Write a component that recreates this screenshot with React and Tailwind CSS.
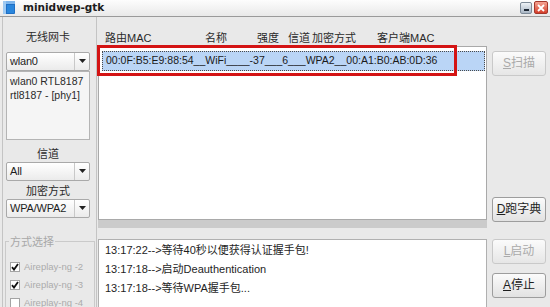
import React from "react";

const FONT = "font-['Liberation_Sans','Noto_Sans_CJK_SC',sans-serif]";

function Combo({ value }) {
  return (
    <div className="ml-[1px] flex h-[19px] w-[84px] rounded-[2px] border border-[#a9a9a9] bg-linear-to-b from-white to-[#ebebeb]">
      <div className="flex flex-1 items-center overflow-hidden whitespace-nowrap pl-[3px] text-[11px] tracking-[-0.2px] text-[#1e1e1e]">
        {value}
      </div>
      <div className="flex w-[15px] items-center justify-center border-l border-[#c8c8c8]">
        <svg width="7" height="4" viewBox="0 0 7 4">
          <path d="M0 0H7L3.5 4Z" fill="#222" />
        </svg>
      </div>
    </div>
  );
}

function Label({ children }) {
  return (
    <div className="ml-[1px] flex h-[16px] w-[84px] items-center justify-center text-[11px] text-[#2a2a2a]">
      {children}
    </div>
  );
}

function Check({ checked, text }) {
  return (
    <div className="flex h-[18px] items-center gap-[4px] pl-[3px]">
      <div className="flex h-[10px] w-[10px] shrink-0 items-center justify-center border border-[#a4a4a4] bg-white">
        {checked && (
          <svg width="8" height="8" viewBox="0 0 8 8">
            <path d="M1 4.2L3 6.6L7 1" stroke="#111" strokeWidth="1.8" fill="none" />
          </svg>
        )}
      </div>
      <span className="whitespace-nowrap text-[9.5px] text-[#ababab]">{text}</span>
    </div>
  );
}

function Btn({ mn, label, disabled }) {
  return (
    <div
      className={
        disabled
          ? "flex h-[25px] w-[54px] items-center justify-center rounded-[3px] border border-[#c9c9c9] bg-linear-to-b from-[#fbfbfb] to-[#e6e6e6] text-[12px] text-[#aaaaaa]"
          : "flex h-[25px] w-[54px] items-center justify-center rounded-[3px] border border-[#9d9d9d] bg-linear-to-b from-[#fbfbfb] to-[#e2e2e2] text-[12px] text-[#1e1e1e]"
      }
    >
      <span className="underline">{mn}</span>
      {label}
    </div>
  );
}

export default function App() {
  return (
    <div className={`flex h-[307px] w-[550px] flex-col overflow-hidden bg-[#e9e9e9] ${FONT}`}>
      {/* title bar */}
      <div className="flex h-[18px] items-center border-b border-[#9a9a9a] bg-linear-to-b from-[#fdfdfd] to-[#e9e9e9]">
        <svg className="ml-[3px]" width="12" height="13" viewBox="0 0 12 13">
          <rect x="0" y="0" width="12" height="13" rx="1" fill="#1f6fc4" />
          <rect x="0" y="0" width="12" height="3" fill="#7fb6ec" />
          <rect x="0" y="0" width="3" height="13" fill="#9fcaf2" />
          <rect x="4" y="4" width="7" height="8" fill="#2a86dc" />
        </svg>
        <span className="ml-[8px] font-['DejaVu_Sans',sans-serif] text-[10.5px] font-bold text-[#1c1c1c]">
          minidwep-gtk
        </span>
        <div className="ml-auto mr-[2px] flex items-center gap-[2px]">
          <div className="flex h-[12px] w-[12px] items-end justify-center rounded-[2px] border border-[#7e8b98] bg-linear-to-b from-[#eef2f6] to-[#a9b6c4] pb-[2px]">
            <div className="h-[2px] w-[5px] bg-[#1d2733]" />
          </div>
          <div className="flex h-[13px] w-[14px] items-center justify-center rounded-[2px] border border-[#a3372b] bg-linear-to-b from-[#f4a292] to-[#d43b28]">
            <svg width="8" height="8" viewBox="0 0 8 8">
              <path d="M1 1L7 7M7 1L1 7" stroke="white" strokeWidth="1.8" />
            </svg>
          </div>
        </div>
      </div>

      {/* body */}
      <div className="flex flex-1 pl-[2px]">
        {/* left column */}
        <div className="flex w-[95px] flex-col border-l border-r border-[#c4c4c4] pl-[2px] pt-[12px]">
          <Label>无线网卡</Label>
          <div className="mt-[7px]">
            <Combo value="wlan0" />
          </div>
          <div className="ml-[1px] h-[69px] w-[84px] border border-[#b4b4b4] bg-[#f5f5f5] pl-[3px] pt-[2px] text-[10.5px] leading-[14px] text-[#2a2a2a]">
            <div>wlan0 RTL8187</div>
            <div>rtl8187 - [phy1]</div>
          </div>
          <div className="mt-[6px]">
            <Label>信道</Label>
          </div>
          <Combo value="All" />
          <div className="mt-[2px]">
            <Label>加密方式</Label>
          </div>
          <Combo value="WPA/WPA2" />
          <fieldset className="mt-[17px] w-[90px] border border-[#cacaca] pl-[1px] pt-[9px]">
            <legend className="ml-[2px] px-[1px] text-[11px] leading-[14px] text-[#a8a8a8]">方式选择</legend>
            <Check checked text="Aireplay-ng -2" />
            <Check checked text="Aireplay-ng -3" />
            <Check text="Aireplay-ng -4" />
          </fieldset>
        </div>

        {/* middle column */}
        <div className="relative flex w-[390px] flex-col pl-[1px]">
          <div className="flex h-[29px] items-center pl-[7px] pt-[13px] text-[11px] text-[#2a2a2a]">
            <span className="w-[100px]">路由MAC</span>
            <span className="w-[52px]">名称</span>
            <span className="w-[31px]">强度</span>
            <span className="w-[24px]">信道</span>
            <span className="w-[65px]">加密方式</span>
            <span>客户端MAC</span>
          </div>
          <div className="h-[174px] border border-[#a9a9a9] bg-white pl-[3px] pr-[1px] pt-[4px]">
            <div className="flex h-[20px] items-center border border-dotted border-[#4a4a4a] bg-[#bad5f6] pl-[3px] text-[10.5px] text-[#1a1a1a]">
              00:0F:B5:E9:88:54__WiFi____-37___6___WPA2__00:A1:B0:AB:0D:36
            </div>
          </div>
          <div className="h-[8px] bg-[#cbcbcb]" />
          <div className="mt-[11px] flex-1 border border-b-0 border-[#b0b0b0] bg-white pl-[6px] pt-[1px] text-[11px] leading-[19px] text-[#1e1e1e]">
            <div>13:17:22--&gt;等待40秒以便获得认证握手包!</div>
            <div>13:17:18--&gt;启动Deauthentication</div>
            <div>13:17:18--&gt;等待WPA握手包...</div>
          </div>

          {/* annotation */}
          <div className="absolute left-0 top-[28px] h-[31px] w-[360px] border-[3px] border-[#d41414]" />
        </div>

        {/* right column */}
        <div className="flex flex-1 flex-col pl-[5px] pt-[34px]">
          <Btn mn="S" label="扫描" disabled />
          <div className="mt-[121px]">
            <Btn mn="D" label="跑字典" />
          </div>
          <div className="mt-[17px]">
            <Btn mn="L" label="启动" disabled />
          </div>
          <div className="mt-[9px]">
            <Btn mn="A" label="停止" />
          </div>
        </div>
      </div>
    </div>
  );
}
